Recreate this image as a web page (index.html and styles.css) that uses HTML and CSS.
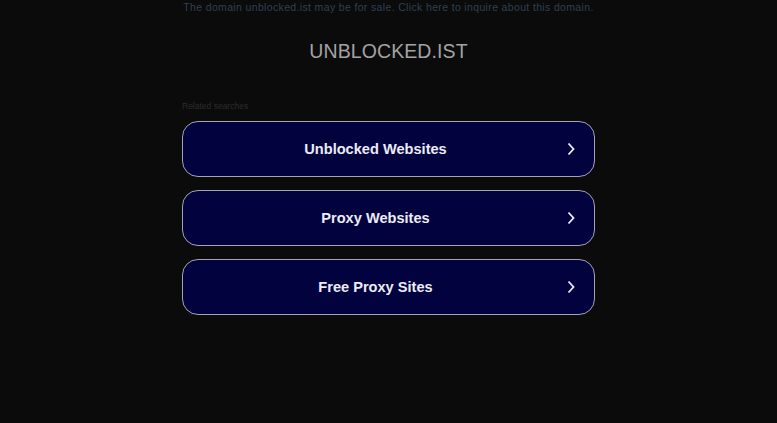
FILE: index.html
```html
<!DOCTYPE html>
<html lang="en">
<head>
    <meta charset="UTF-8">
    <meta name="viewport" content="width=device-width, initial-scale=1.0">
    <title>unblocked.ist</title>
    <link rel="stylesheet" href="styles.css">
</head>
<body>
    <div class="sale-notice">
        <a href="#">The domain unblocked.ist may be for sale. Click here to inquire about this domain.</a>
    </div>
    <h1 class="domain">UNBLOCKED.IST</h1>
    <div class="related">
        <div class="related-title">Related searches</div>
        <a class="search-link" href="#">
            <span class="label">Unblocked Websites</span>
            <svg class="chevron" width="10" height="14" viewBox="0 0 10 14"><path d="M2.5 1.5 L7.5 7 L2.5 12.5" fill="none" stroke="#eeeef8" stroke-width="1.8"/></svg>
        </a>
        <a class="search-link" href="#">
            <span class="label">Proxy Websites</span>
            <svg class="chevron" width="10" height="14" viewBox="0 0 10 14"><path d="M2.5 1.5 L7.5 7 L2.5 12.5" fill="none" stroke="#eeeef8" stroke-width="1.8"/></svg>
        </a>
        <a class="search-link" href="#">
            <span class="label">Free Proxy Sites</span>
            <svg class="chevron" width="10" height="14" viewBox="0 0 10 14"><path d="M2.5 1.5 L7.5 7 L2.5 12.5" fill="none" stroke="#eeeef8" stroke-width="1.8"/></svg>
        </a>
    </div>
</body>
</html>
```

FILE: styles.css
```css
body {
    margin: 0;
    background-color: #0b0b0b;
    font-family: "Liberation Sans", Arial, sans-serif;
}
.sale-notice {
    padding-top: 1px;
    text-align: center;
    font-size: 10.5px;
    line-height: 12px;
    letter-spacing: 0.35px;
}
.sale-notice a {
    color: #2f4052;
    text-decoration: none;
}
.domain {
    margin: 26px 0 0;
    text-align: center;
    font-size: 19.5px;
    line-height: 24px;
    font-weight: normal;
    letter-spacing: 0.1px;
    color: #a3a3a3;
}
.related {
    width: 413px;
    margin: 38px auto 0;
}
.related-title {
    font-size: 8.5px;
    line-height: 11px;
    color: #2c2c2c;
    margin-bottom: 9px;
}
.search-link {
    display: flex;
    align-items: center;
    box-sizing: border-box;
    height: 56px;
    margin-bottom: 13px;
    padding: 0 18px 0 2px;
    background-color: #02023f;
    border: 1px solid #a4a4b4;
    border-radius: 16px;
    text-decoration: none;
}
.label {
    flex: 1;
    text-align: center;
    font-size: 14.6px;
    font-weight: bold;
    color: #ececf6;
}
.chevron {
    flex: none;
}
```
